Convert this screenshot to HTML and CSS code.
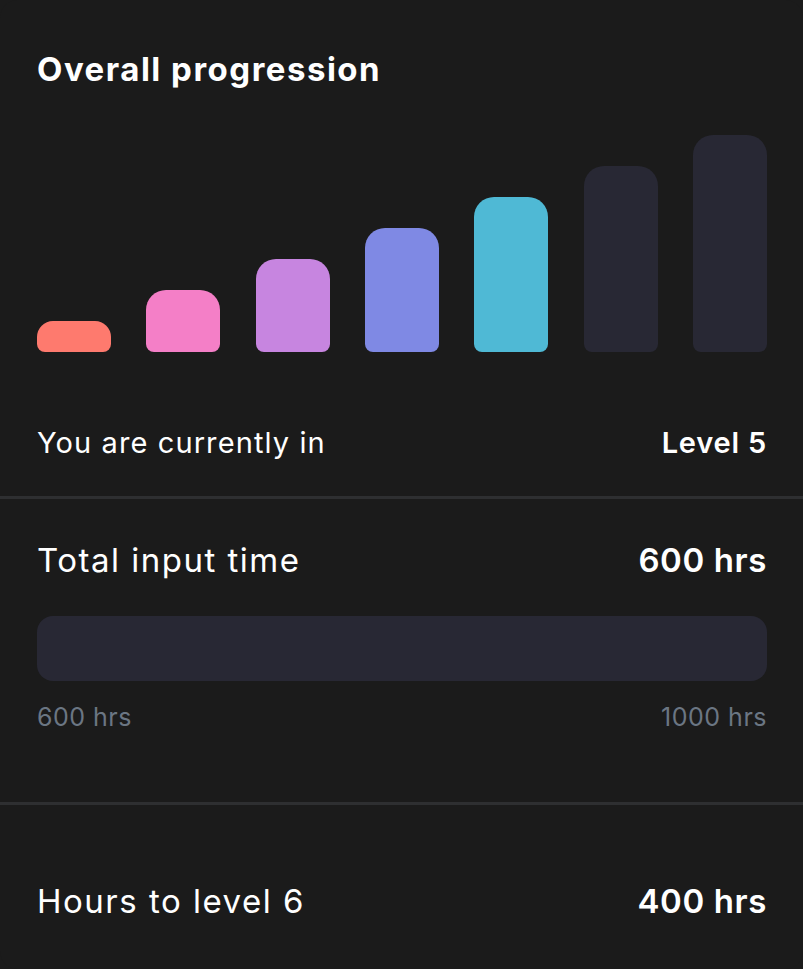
FILE: index.html
```html
<!DOCTYPE html>
<html lang="en">

<head>
  <meta charset="UTF-8">
  <meta name="viewport" content="width=device-width, initial-scale=1.0">
  <title>Overall progression</title>
  <link rel="stylesheet" href="styles.css">
</head>

<body>
  <div class="card">
    <h1 class="title">Overall progression</h1>

    <div class="levels">
      <div class="bar bar-1" style="height: 31px"></div>
      <div class="bar bar-2" style="height: 62px"></div>
      <div class="bar bar-3" style="height: 93px"></div>
      <div class="bar bar-4" style="height: 124px"></div>
      <div class="bar bar-5" style="height: 155px"></div>
      <div class="bar bar-locked" style="height: 186px"></div>
      <div class="bar bar-locked" style="height: 217px"></div>
    </div>

    <div class="row current">
      <span>You are currently in</span>
      <strong>Level 5</strong>
    </div>

    <div class="section input-time">
      <div class="row big">
        <span>Total input time</span>
        <strong>600 hrs</strong>
      </div>
      <div class="track">
        <div class="fill" style="width: 0%"></div>
      </div>
      <div class="row range">
        <span>600 hrs</span>
        <span>1000 hrs</span>
      </div>
    </div>

    <div class="section next-level">
      <div class="row big">
        <span>Hours to level 6</span>
        <strong>400 hrs</strong>
      </div>
    </div>
  </div>
</body>

</html>
```

FILE: styles.css
```css
html,
body {
  margin: 0;
  height: 969px;
  width: 803px;
  background: #1b1b1b;
  overflow: hidden;
  font-family: Inter, Lato, sans-serif;
  color: #fff;
}

.card {
  box-sizing: border-box;
  height: 969px;
  padding: 0 36px 0 37px;
  background: #1b1b1b;
  border-radius: 18px;
}

.title {
  margin: 0;
  padding-top: 49px;
  font-size: 33px;
  line-height: 40px;
  font-weight: 700;
  letter-spacing: 1.5px;
}

.levels {
  display: flex;
  align-items: flex-end;
  justify-content: space-between;
  height: 217px;
  margin-top: 46px;
}

.bar {
  width: 74px;
  border-radius: 20px 20px 8px 8px;
}

.bar-1 { background: #fe7a6e; border-radius: 16px 16px 8px 8px; }
.bar-2 { background: #f47fc7; }
.bar-3 { background: #c785e0; }
.bar-4 { background: #7f89e4; }
.bar-5 { background: #4fb9d5; }
.bar-locked { background: #282834; }

.row {
  display: flex;
  justify-content: space-between;
  align-items: baseline;
}

.row strong {
  font-weight: 600;
  letter-spacing: 0.8px;
}

.current {
  font-size: 29px;
  line-height: 36px;
  padding: 73px 0 35px;
  letter-spacing: 1.1px;
}

.section {
  border-top: 3px solid #2e2f31;
  margin: 0 -36px 0 -37px;
  padding: 0 36px 0 37px;
}

.big {
  font-size: 33px;
  line-height: 40px;
  letter-spacing: 1.5px;
}

.big strong {
  letter-spacing: 0.6px;
}

.input-time .big {
  padding-top: 41px;
}

.track {
  height: 65px;
  margin-top: 36px;
  background: #282834;
  border-radius: 16px;
  overflow: hidden;
}

.fill {
  height: 100%;
  background: #4fb9d5;
}

.range {
  font-size: 25px;
  line-height: 32px;
  color: #6b7683;
  padding: 20px 0 69px;
  letter-spacing: 0.5px;
}

.next-level .big {
  padding-top: 76px;
}
```
